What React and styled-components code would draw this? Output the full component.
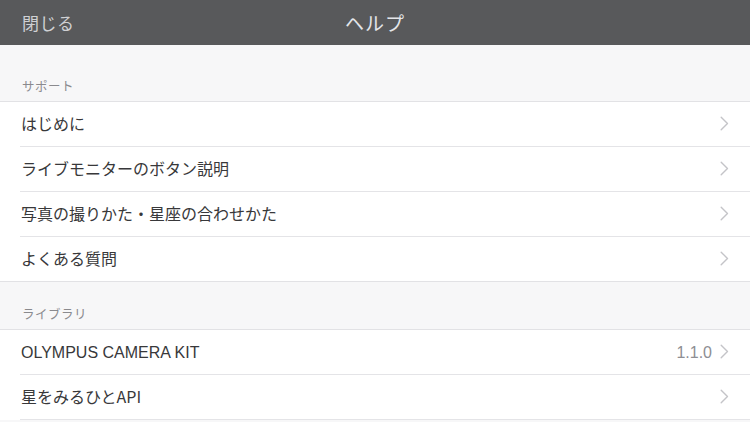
import styled, { createGlobalStyle } from 'styled-components';

const GlobalStyle = createGlobalStyle`
    html, body {
        margin: 0;
        padding: 0;
        background: #f7f7f8;
        font-family: 'Noto Sans CJK JP', 'Liberation Sans', sans-serif;
        overflow: hidden;
    }
`;

const sections = [
    {
        title: 'サポート',
        items: [
            { label: 'はじめに' },
            { label: 'ライブモニターのボタン説明' },
            { label: '写真の撮りかた・星座の合わせかた' },
            { label: 'よくある質問' },
        ],
        closed: true,
    },
    {
        title: 'ライブラリ',
        items: [
            { label: 'OLYMPUS CAMERA KIT', detail: '1.1.0', latin: true },
            { label: '星をみるひとAPI' },
        ],
        closed: false,
    },
];

function Chevron() {
    return (
        <svg width="9" height="15" viewBox="0 0 9 15" fill="none">
            <path d="M1.2 1.2L7.5 7.5L1.2 13.8" stroke="#c4c4c8" strokeWidth="1.4" strokeLinecap="round" strokeLinejoin="round" />
        </svg>
    );
}

export default function App() {
    return (
        <Page>
            <GlobalStyle />
            <NavBar>
                <NavButton>閉じる</NavButton>
                <NavTitle>ヘルプ</NavTitle>
                <span />
            </NavBar>
            {sections.map((section, sIndex) => (
                <Section key={sIndex}>
                    <SectionTitle first={sIndex === 0}>{section.title}</SectionTitle>
                    <List closed={section.closed}>
                        {section.items.map((item, index) => (
                            <Row key={index} last={section.closed && index === section.items.length - 1}>
                                <RowLabel latin={item.latin}>{item.label}</RowLabel>
                                {item.detail && <RowDetail>{item.detail}</RowDetail>}
                                <Chevron />
                            </Row>
                        ))}
                    </List>
                </Section>
            ))}
        </Page>
    );
}

const Page = styled.div`
    width: 750px;
    height: 422px;
    overflow: hidden;
    background: #f7f7f8;
`;

const NavBar = styled.header`
    height: 45px;
    background: #58595b;
    display: grid;
    grid-template-columns: 1fr auto 1fr;
    align-items: center;
    padding: 0 22px;
`;

const NavButton = styled.span`
    font-size: 17px;
    color: #cfd0d3;
    letter-spacing: 0.5px;
`;

const NavTitle = styled.h1`
    margin: 0;
    font-size: 19px;
    font-weight: 400;
    color: #e4e6ea;
    letter-spacing: 1px;
`;

const Section = styled.section`
    display: flex;
    flex-direction: column;
`;

const SectionTitle = styled.div`
    height: ${props => props.first ? '56px' : '47px'};
    box-sizing: border-box;
    padding: 0 0 6px 22px;
    display: flex;
    align-items: flex-end;
    font-size: 12.5px;
    color: #8a8a8e;
    letter-spacing: 0.5px;
`;

const List = styled.ul`
    margin: 0;
    padding: 0 0 0 20px;
    list-style: none;
    background: #ffffff;
    border-top: 1px solid #e2e2e5;
    border-bottom: ${props => props.closed ? '1px solid #e2e2e5' : 'none'};
`;

const Row = styled.li`
    box-sizing: border-box;
    display: flex;
    align-items: center;
    padding: 0 21px 2px 0;
    border-bottom: ${props => props.last ? 'none' : '1px solid #e4e4e7'};
    height: ${props => props.last ? '44px' : '45px'};
`;

const RowLabel = styled.span`
    flex: 1;
    font-size: 16px;
    color: #38383a;
    padding-left: 1px;
    padding-top: ${props => props.latin ? '3px' : '0'};
    font-family: ${props => props.latin ? "'Liberation Sans', sans-serif" : "'Noto Sans CJK JP', sans-serif"};
`;

const RowDetail = styled.span`
    font-family: 'Liberation Sans', sans-serif;
    font-size: 16px;
    color: #8e8e93;
    margin-right: 8px;
    padding-top: 3px;
`;
